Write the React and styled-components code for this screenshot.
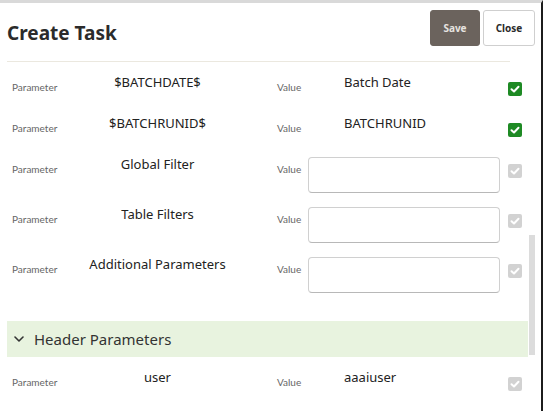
import styled, { createGlobalStyle } from "styled-components";

const GlobalStyle = createGlobalStyle`
  html, body {
    margin: 0;
    padding: 0;
    background: #ffffff;
  }
  body {
    font-family: "Noto Sans", "Open Sans", sans-serif;
  }
`;

const Frame = styled.div`
  position: relative;
  width: 543px;
  height: 411px;
  box-sizing: border-box;
  border-top: 3px solid #d9d9d9;
  border-right: 2px solid #1c1c1c;
  overflow: hidden;
  background: #fff;
`;

const Header = styled.div`
  display: flex;
  justify-content: space-between;
  align-items: flex-start;
  padding: 7px 6px 0 7px;
`;

const Title = styled.h1`
  margin: 0;
  padding-top: 9px;
  font-size: 19px;
  line-height: 28px;
  font-weight: 700;
  color: #2b2b2b;
`;

const Actions = styled.div`
  display: flex;
  gap: 3px;
`;

const Button = styled.button`
  width: ${({ $w }) => $w}px;
  height: 36px;
  border-radius: 3px;
  font-family: "Noto Sans", sans-serif;
  font-size: 10px;
  font-weight: 700;
  cursor: pointer;
  border: 1px solid ${({ $primary }) => ($primary ? "#6b635d" : "#cfcfcf")};
  background: ${({ $primary }) => ($primary ? "#6b635d" : "#ffffff")};
  color: ${({ $primary }) => ($primary ? "#e6e3e0" : "#2b2b2b")};
`;

const Divider = styled.div`
  margin: 14px 0 0 7px;
  width: 503px;
  height: 1px;
  background: #ebe8df;
`;

const Body = styled.div`
  padding: 12px 0 0 7px;
  width: 521px;
`;

const Row = styled.div`
  display: grid;
  grid-template-columns: 58px 175px 63px 192px 22px;
  align-items: start;
  padding: 0 0 13px 5px;
  min-height: 41px;
  box-sizing: border-box;
`;

const Label = styled.span`
  padding-top: 7px;
  font-family: Lato, "Noto Sans", sans-serif;
  font-size: 10px;
  line-height: 12px;
  color: #666;
`;

const ValueLabel = styled(Label)`
  padding-left: 32px;
`;

const Name = styled.span`
  text-align: center;
  font-size: 13px;
  line-height: 16px;
  color: #222;
`;

const ValueText = styled.span`
  padding-left: 36px;
  font-size: 13px;
  line-height: 16px;
  color: #222;
`;

const Input = styled.input`
  margin-top: 1px;
  width: 192px;
  height: 36px;
  box-sizing: border-box;
  border: 1px solid #d0d0d0;
  border-bottom-color: #b8b8b8;
  border-radius: 4px;
  background: #fff;
  outline: none;
`;

const CheckCell = styled.span`
  display: flex;
  justify-content: flex-end;
  padding-top: 8px;
`;

const SectionBar = styled.div`
  display: flex;
  align-items: center;
  gap: 10px;
  margin: 15px 0 12px 0;
  height: 36px;
  padding-left: 7px;
  background: #e8f3df;
  font-size: 15px;
  color: #333;
`;

const ScrollThumb = styled.div`
  position: absolute;
  left: 529px;
  top: 232px;
  width: 6px;
  height: 120px;
  background: #dcdcdc;
`;

const Check = ({ on }) => (
  <svg width="14" height="14" viewBox="0 0 14 14">
    <rect width="14" height="14" rx="2" fill={on ? "#1e8a24" : "#d2d2d2"} />
    <path
      d="M3.5 7.2 L6 9.5 L10.5 4.8"
      fill="none"
      stroke="#fff"
      strokeWidth="2"
      strokeLinecap="round"
      strokeLinejoin="round"
    />
  </svg>
);

const Chevron = () => (
  <svg width="10" height="6" viewBox="0 0 10 6">
    <path
      d="M1 1 L5 5 L9 1"
      fill="none"
      stroke="#333"
      strokeWidth="1.6"
      strokeLinecap="round"
      strokeLinejoin="round"
    />
  </svg>
);

const params = [
  { name: "$BATCHDATE$", value: "Batch Date", on: true },
  { name: "$BATCHRUNID$", value: "BATCHRUNID", on: true },
  { name: "Global Filter", input: true },
  { name: "Table Filters", input: true },
  { name: "Additional Parameters", input: true },
];

const ParamRow = ({ name, value, input, on }) => (
  <Row>
    <Label>Parameter</Label>
    <Name>{name}</Name>
    <ValueLabel>Value</ValueLabel>
    {input ? <Input /> : <ValueText>{value}</ValueText>}
    <CheckCell>
      <Check on={on} />
    </CheckCell>
  </Row>
);

export default function App() {
  return (
    <Frame>
      <GlobalStyle />
      <Header>
        <Title>Create Task</Title>
        <Actions>
          <Button $primary $w={50}>Save</Button>
          <Button $w={52}>Close</Button>
        </Actions>
      </Header>
      <Divider />
      <Body>
        {params.map((p) => (
          <ParamRow key={p.name} {...p} />
        ))}
        <SectionBar>
          <Chevron />
          Header Parameters
        </SectionBar>
        <ParamRow name="user" value="aaaiuser" />
      </Body>
      <ScrollThumb />
    </Frame>
  );
}
